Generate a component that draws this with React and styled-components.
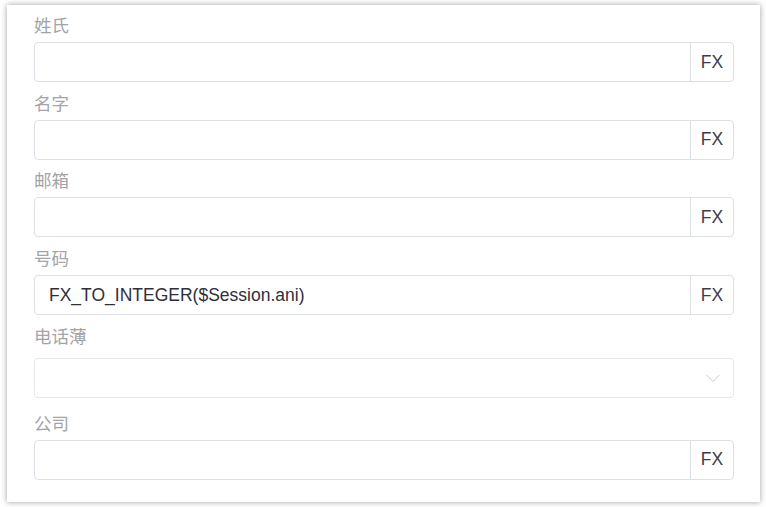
import React from 'react'
import styled, { createGlobalStyle } from 'styled-components'

const GlobalStyle = createGlobalStyle`
  html, body {
    margin: 0;
    padding: 0;
    background: #fff;
  }
  body {
    font-family: "Liberation Sans", Arial, "Noto Sans CJK SC", sans-serif;
  }
`

const fields = [
  { label: '姓氏', value: '' },
  { label: '名字', value: '' },
  { label: '邮箱', value: '' },
  { label: '号码', value: 'FX_TO_INTEGER($Session.ani)' },
  { label: '电话薄', select: true },
  { label: '公司', value: '' },
]

export default function App() {
  return (
    <>
      <GlobalStyle />
      <Page>
        <Card>
          {fields.map((f) =>
            f.select ? (
              <Item key={f.label} select>
                <Label>{f.label}</Label>
                <Select>
                  <svg width="16" height="16" viewBox="0 0 16 16" fill="none">
                    <path d="M1.5 5 L8 11.5 L14.5 5" stroke="#c8cbd2" strokeWidth="1" />
                  </svg>
                </Select>
              </Item>
            ) : (
              <Item key={f.label}>
                <Label>{f.label}</Label>
                <InputGroup>
                  <Input>{f.value}</Input>
                  <Append>FX</Append>
                </InputGroup>
              </Item>
            )
          )}
        </Card>
      </Page>
    </>
  )
}

const Page = styled.div`
  width: 766px;
  height: 507px;
  box-sizing: border-box;
  padding: 5px 6px 5px 7px;
`

const Card = styled.div`
  height: 100%;
  box-sizing: border-box;
  background: #fff;
  box-shadow: 0 0 6px rgba(0, 0, 0, 0.38);
  padding: 8px 26px 0 27px;
  display: flex;
  flex-direction: column;
`

const Item = styled.div`
  display: flex;
  flex-direction: column;
  margin-bottom: ${(p) => (p.select ? '13px' : '8.7px')};
  & > div:first-child {
    margin-bottom: ${(p) => (p.select ? '10px' : '5px')};
  }
`

const Label = styled.div`
  height: 24px;
  line-height: 24px;
  font-size: 17.5px;
  color: #a3a3a8;
  font-family: "Noto Sans CJK SC", sans-serif;
`

const InputGroup = styled.div`
  display: flex;
  height: 40px;
  box-sizing: border-box;
  border: 1px solid #dcdfe6;
  border-radius: 4px;
  overflow: hidden;
`

const Input = styled.div`
  flex: 1;
  padding: 0 14px;
  display: flex;
  align-items: center;
  font-size: 17.5px;
  color: #2f2f3a;
`

const Append = styled.div`
  width: 42px;
  border-left: 1px solid #dcdfe6;
  display: flex;
  align-items: center;
  justify-content: center;
  font-size: 17.5px;
  color: #3b3d4c;
`

const Select = styled.div`
  height: 40px;
  box-sizing: border-box;
  border: 1px solid #e4e7ed;
  border-radius: 4px;
  display: flex;
  align-items: center;
  justify-content: flex-end;
  padding-right: 12px;
`
